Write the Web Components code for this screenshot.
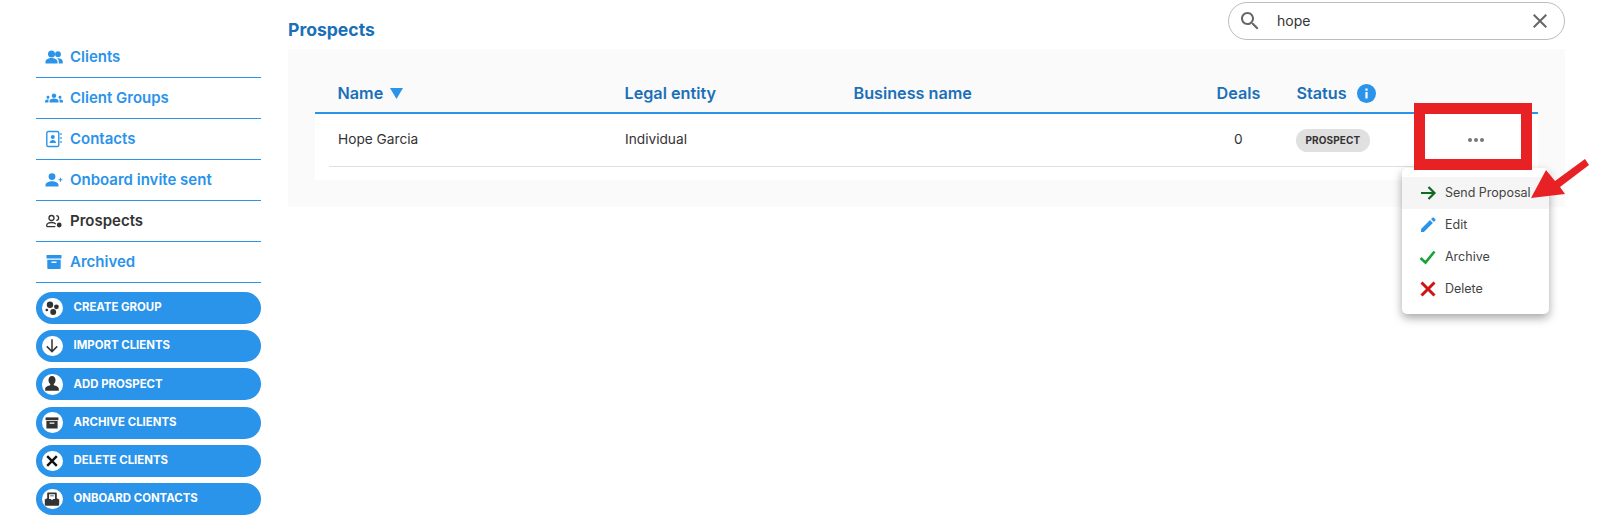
<!DOCTYPE html>
<html lang="en"><head><meta charset="utf-8"><title>Prospects</title>
<style>
html,body{margin:0;padding:0;background:#fff}
body{font-family:Inter,"Liberation Sans",sans-serif;color:#333;width:1597px;height:520px;overflow:hidden}
svg{display:block}
</style></head><body>
<app-shell>
  <side-nav slot="side">
    <nav-item><svg slot="icon" width="18" height="18" viewBox="0 0 18 18" fill="#2a93ea"><circle cx="6.500" cy="6" r="3.500"/><circle cx="13" cy="6.200" r="2.900"/><path d="M.5 15.500v-2c0-2.300 3.500-3.500 6-3.500s6 1.200 6 3.500v2z"/><path d="M13.700 15.500v-2.200c0-1.200-.6-2.200-1.600-3 .4-.1.900-.1 1.300-.1 1.900 0 4.300 1.100 4.300 3v2.300z"/></svg>Clients</nav-item>
    <nav-item><svg slot="icon" width="18" height="18" viewBox="0 0 24 24" fill="#2a93ea"><path d="M12 12.750c1.630 0 3.070.39 4.240.9 1.080.48 1.760 1.560 1.760 2.730V18H6v-1.610c0-1.180.68-2.260 1.760-2.730 1.170-.52 2.610-.91 4.240-.91zM4 13c1.100 0 2-.9 2-2s-.9-2-2-2-2 .9-2 2 .9 2 2 2zm1.130 1.100c-.37-.06-.74-.1-1.130-.1-.99 0-1.930.21-2.780.58C.48 14.900 0 15.620 0 16.430V18h4.500v-1.610c0-.83.23-1.610.63-2.290zM20 13c1.100 0 2-.9 2-2s-.9-2-2-2-2 .9-2 2 .9 2 2 2zm4 3.430c0-.81-.48-1.530-1.220-1.850-.85-.37-1.790-.58-2.780-.58-.39 0-.76.04-1.130.1.4.68.63 1.460.63 2.290V18H24v-1.570zM12 6c1.660 0 3 1.340 3 3s-1.340 3-3 3-3-1.340-3-3 1.340-3 3-3z"/></svg>Client Groups</nav-item>
    <nav-item><svg slot="icon" width="18" height="18" viewBox="0 0 18 18" fill="none" stroke="#2a93ea"><rect x="1.800" y="1.500" width="12" height="15" rx="1.600" stroke-width="1.400"/><circle cx="7.800" cy="7" r="2" fill="#2a93ea" stroke="none"/><path d="M4.600 13c0-2 1.600-3 3.200-3s3.200 1 3.200 3z" fill="#2a93ea" stroke="none"/><path d="M16 3v2M16 7v2M16 11v2" stroke-width="1.200"/></svg>Contacts</nav-item>
    <nav-item><svg slot="icon" width="18" height="18" viewBox="0 0 18 18" fill="#2a93ea"><circle cx="7" cy="5.600" r="3.400"/><path d="M.5 15.500v-1.400c0-2.600 4-3.800 6.500-3.800s6.500 1.200 6.500 3.800v1.400z"/><path d="M13.600 8.200h1.300V6.700h1v1.500h1.500v1h-1.500v1.500h-1V9.200h-1.300z"/></svg>Onboard invite sent</nav-item>
    <nav-item active><svg slot="icon" width="18" height="18" viewBox="0 0 18 18" fill="none" stroke="#333" stroke-width="1.300"><circle cx="6.500" cy="6" r="2.500"/><path d="M1.700 14.600v-1.400c0-1.800 3-2.700 4.800-2.700 1.800 0 3.500.6 4.300 1.700"/><path d="M1.700 14.600h8.600"/><path d="M11.300 3.700c1.600 0 2.300 1.100 2.300 2.300s-.7 2.300-2.300 2.300"/><circle cx="14.200" cy="13" r="2.400" fill="#333" stroke="none"/></svg>Prospects</nav-item>
    <nav-item><svg slot="icon" width="18" height="18" viewBox="0 0 18 18" fill="#2a93ea"><rect x="1.500" y="2" width="15" height="3.600" rx=".5"/><path d="M2.300 6.800h13.400v8.200a1 1 0 0 1-1 1H3.300a1 1 0 0 1-1-1zM6.500 8.600v1.300h5V8.600z" fill-rule="evenodd"/></svg>Archived</nav-item>
    <div class="actions" style="margin-top:9px;display:block;flex:none">
      <action-button><svg slot="icon" viewBox="0 0 20 20" fill="#333"><circle cx="7.500" cy="6" r="4"/><circle cx="15.500" cy="8.500" r="3"/><circle cx="11.500" cy="15" r="3.700"/><circle cx="3.500" cy="12.500" r="1.700"/></svg>CREATE GROUP</action-button>
      <action-button><svg slot="icon" viewBox="0 0 20 20" fill="none" stroke="#333" stroke-width="1.900"><path d="M10 1.500v15M3.500 10.500l6.500 6.500 6.500-6.500"/></svg>IMPORT CLIENTS</action-button>
      <action-button><svg slot="icon" viewBox="0 0 20 20" fill="#333"><path d="M10 0c2.800 0 4.400 2.200 4.400 5 0 2.200-1 4.100-2.200 5v1.500c2.800.8 6.300 1.900 6.300 4.500v2.500H1.500V16c0-2.600 3.500-3.700 6.300-4.500V10C6.600 9.100 5.600 7.200 5.600 5c0-2.800 1.600-5 4.400-5z"/></svg>ADD PROSPECT</action-button>
      <action-button><svg slot="icon" viewBox="0 0 20 20" fill="#333"><rect x="2" y="3" width="16" height="3.500"/><path d="M3 7.500h14v9.500H3zM7 9.500v1.300h6V9.500z" fill-rule="evenodd"/></svg>ARCHIVE CLIENTS</action-button>
      <action-button><svg slot="icon" viewBox="0 0 20 20" stroke="#111" stroke-width="3" fill="none"><path d="M4 4l12 12M16 4 4 16"/></svg>DELETE CLIENTS</action-button>
      <action-button><svg slot="icon" viewBox="0 0 20 20" fill="#333"><path d="M5 2h10a1 1 0 0 1 1 1v6l3 1.500V17a1.500 1.500 0 0 1-1.500 1.500h-15A1.500 1.500 0 0 1 1 17v-6.500L4 9V3a1 1 0 0 1 1-1zm1.300 2v6h2.200l1.500 1.500 1.500-1.500h2.200V4zM7.700 5.500h4.600v1.200H7.700z" fill-rule="evenodd"/></svg>ONBOARD CONTACTS</action-button>
    </div>
  </side-nav>
  <main-area slot="main">
    <page-header>
      <search-box slot="search" value="hope"></search-box>
      Prospects
    </page-header>
    <prospects-panel>
      <table-head></table-head>
      <prospect-row name="Hope Garcia" entity="Individual" deals="0" status="PROSPECT"></prospect-row>
      <action-menu slot="overlay">
        <menu-entry hot><svg slot="icon" width="18" height="18" viewBox="0 0 18 18" fill="none" stroke="#0d6b22" stroke-width="2.200"><path d="M2 9h13M9.500 3 15.500 9 9.500 15"/></svg>Send Proposal</menu-entry>
        <menu-entry><svg slot="icon" width="18" height="18" viewBox="0 0 18 18" fill="#2a93ea"><path d="M2.500 12.600 11 4.100l2.900 2.900-8.500 8.500a2.300 2.300 0 0 1-1.500.6H2v-2.100c0-.5.200-1 .5-1.400zM12 3.100l1.400-1.400c.4-.4 1-.4 1.400 0l1.500 1.500c.4.4.4 1 0 1.400L14.900 6z"/></svg>Edit</menu-entry>
        <menu-entry><svg slot="icon" width="18" height="18" viewBox="0 0 18 18" fill="none" stroke="#18a33a" stroke-width="2.600"><path d="M1.500 10 6.500 14.500 15.500 3.500"/></svg>Archive</menu-entry>
        <menu-entry><svg slot="icon" width="18" height="18" viewBox="0 0 18 18" fill="none" stroke="#cc1616" stroke-width="3"><path d="M2.500 2.500l13 13M15.500 2.500l-13 13"/></svg>Delete</menu-entry>
      </action-menu>
      <call-out slot="overlay"></call-out>
    </prospects-panel>
  </main-area>
</app-shell>
<script>
function def(name, css, html){
  customElements.define(name, class extends HTMLElement{
    constructor(){super();const r=this.attachShadow({mode:'open'});r.innerHTML='<style>'+css+'</style>'+html;}
  });
}
customElements.define('prospect-row', class extends HTMLElement{
  connectedCallback(){
    if(this.shadowRoot) return;
    const a=n=>this.getAttribute(n)||'';
    this.attachShadow({mode:'open'}).innerHTML=`<style>:host{display:block;background:#fff;height:66px;box-sizing:border-box;padding:0 14px;font:400 13.700px/1 Inter,"Liberation Sans",sans-serif;color:#333}
.r{display:grid;grid-template-columns:287px 229px 363px 80px 167px 24px;align-items:center;height:53px;box-sizing:border-box;padding-left:9px;border-bottom:1px solid #e0e0e0}
.d{padding-left:17px}.b{display:inline-block;margin-left:-1px;background:#e0e0e0;border-radius:12px;padding:0 9.500px;height:23px;line-height:23px;font-size:10px;font-weight:700;letter-spacing:.1px}
.m{display:flex;gap:1.500px;justify-content:center}.m i{display:block;width:4.500px;height:4.500px;border-radius:50%;background:#777}</style>
<div class="r"><div>${a('name')}</div><div>${a('entity')}</div><div></div><div class="d">${a('deals')}</div><div><span class="b">${a('status')}</span></div><div class="m" aria-label="More"><i></i><i></i><i></i></div></div>`;
  }
});
customElements.define('search-box', class extends HTMLElement{
  connectedCallback(){
    if(this.shadowRoot) return;
    this.attachShadow({mode:'open'}).innerHTML=`<style>:host{display:flex;align-items:center;width:337px;height:38px;box-sizing:border-box;border:1px solid #bdbdbd;border-radius:19px;padding:0 12px 0 9px;font:400 14px/1 Inter,"Liberation Sans",sans-serif;color:#333;background:#fff}
.t{flex:1;margin-left:15px}</style><svg width="24" height="24" viewBox="0 0 24 24" fill="#666"><path d="M15.500 14h-.79l-.28-.27C15.410 12.590 16 11.110 16 9.500 16 5.910 13.090 3 9.500 3S3 5.910 3 9.500 5.910 16 9.500 16c1.610 0 3.090-.59 4.230-1.570l.27.28v.79l5 4.990L20.490 19l-4.990-5zm-6 0C7.010 14 5 11.990 5 9.500S7.010 5 9.500 5 14 7.010 14 9.500 11.990 14 9.500 14z"/></svg><span class="t">${this.getAttribute('value')}</span><svg width="24" height="24" viewBox="0 0 24 24" fill="#666"><path d="M19 6.410 17.590 5 12 10.590 6.410 5 5 6.410 10.590 12 5 17.590 6.410 19 12 13.410 17.590 19 19 17.590 13.410 12z"/></svg>`;
  }
});
def('app-shell',':host{display:flex;width:1597px;height:520px;box-sizing:border-box;padding-left:36px;padding-right:32px;gap:27px}::slotted([slot=main]){flex:1;min-width:0}','<slot name="side"></slot><slot name="main"></slot>');
def('side-nav',':host{display:flex;flex-direction:column;width:225px;flex:none;padding-top:37px}','<slot></slot>');
def('nav-item',`:host{display:flex;flex:none;align-items:center;height:40px;box-sizing:content-box;border-bottom:1px solid #2a93ea;padding-left:9px;gap:7px;font:600 15px/1 Inter,"Liberation Sans",sans-serif;color:#2a93ea}
span{margin-bottom:2px}:host([active]){color:#333}`,'<slot name="icon"></slot><span><slot></slot></span>');
def('action-button',`:host{display:flex;align-items:center;height:32px;border-radius:16px;background:#2a93ea;color:#fff;font:700 11.400px/1 Inter,"Liberation Sans",sans-serif;box-sizing:border-box;padding-left:6px;gap:11px;margin-bottom:6.200px}
.c{width:20.500px;height:20.500px;border-radius:50%;background:#fff;display:flex;align-items:center;justify-content:center;flex:none}
::slotted(svg){width:16px;height:16px}`,'<span class="c"><slot name="icon"></slot></span><span><slot></slot></span>');
def('main-area',':host{display:flex;flex-direction:column}','<slot></slot>');
def('page-header',`:host{display:flex;justify-content:space-between;height:49px;font:700 17.600px/1 Inter,"Liberation Sans",sans-serif;color:#1a70b8}
.t{padding-top:21px}.s{padding-top:2px}`,'<div class="t"><slot></slot></div><div class="s"><slot name="search"></slot></div>');
def('prospects-panel',`:host{display:block;position:relative;background:#fafafa;height:158px;box-sizing:border-box;padding:0 27px}
.i{display:flex;flex-direction:column}`,'<div class="i"><slot></slot></div><slot name="overlay"></slot>');
def('table-head',`:host{display:grid;grid-template-columns:287px 229px 363px 80px 1fr;align-items:center;height:65px;box-sizing:border-box;padding:26px 0 0 22.500px;border-bottom:2px solid #2a93ea;font:600 16.200px/1 Inter,"Liberation Sans",sans-serif;color:#1a70b8}
.n{display:flex;align-items:center;gap:7px}.n svg{margin-top:1px}.s{display:flex;align-items:center;gap:10px}`,
`<div class="n">Name<svg width="13" height="11" viewBox="0 0 13 11"><path d="M0 0h13L6.500 11z" fill="#2a93ea"/></svg></div><div>Legal entity</div><div>Business name</div><div>Deals</div><div class="s">Status<svg width="19" height="19" viewBox="0 0 19 19"><circle cx="9.500" cy="9.500" r="9.500" fill="#2a93ea"/><rect x="8.400" y="8" width="2.200" height="6.500" fill="#fff"/><rect x="8.400" y="4.500" width="2.200" height="2.200" fill="#fff"/></svg></div>`);
def('action-menu',`:host{position:absolute;left:1114px;top:119px;width:147px;height:146px;box-sizing:border-box;padding:9px 0;background:#fff;border-radius:5px;box-shadow:0 4px 10px rgba(0,0,0,.35);display:block}`,'<slot></slot>');
def('menu-entry',`:host{display:flex;align-items:center;height:32px;padding-left:17px;gap:8px;font:400 12.500px/1 Inter,"Liberation Sans",sans-serif;color:#444}
:host([hot]){background:#f5f5f5}`,'<slot name="icon"></slot><span><slot></slot></span>');
def('call-out',`:host{position:absolute;left:0;top:0;display:block;pointer-events:none}
.box{position:absolute;left:1126px;top:53.500px;width:118px;height:67px;box-sizing:border-box;border:11.500px solid #e82224}
svg{position:absolute;left:1226px;top:90px;overflow:visible}`,
`<div class="box"></div><svg width="80" height="80" viewBox="0 0 80 80"><path d="M17 59 32 31 41 42 71 20 75 26 46 48 51 55z" fill="#e82224"/></svg>`);
</script>
</body></html>
